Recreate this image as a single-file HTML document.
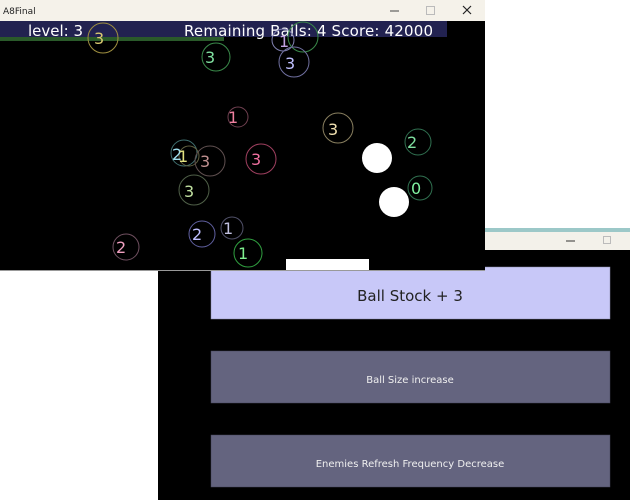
<!DOCTYPE html>
<html><head><style>
html,body{margin:0;padding:0;width:630px;height:500px;overflow:hidden;background:#fff;font-family:"DejaVu Sans","Liberation Sans",sans-serif}
svg{position:absolute;left:0;top:0}
</style></head><body>
<svg width="630" height="500" xmlns="http://www.w3.org/2000/svg" font-family="DejaVu Sans, Liberation Sans, sans-serif">
<rect x="485" y="228" width="145" height="4" fill="#9cc8c8"/>
<rect x="485" y="232" width="145" height="18" fill="#f3f1ea"/>
<line x1="566" y1="241" x2="575" y2="241" stroke="#333" stroke-width="1"/>
<rect x="603.5" y="236.5" width="7" height="7" fill="none" stroke="#bbb"/>
<rect x="158" y="250" width="472" height="250" fill="#000"/>
<rect x="211" y="267" width="399" height="52" fill="#c8c8f8" stroke="#8888a8" stroke-width="0.5"/>
<text x="410" y="301" font-size="15" fill="#222" text-anchor="middle">Ball Stock + 3</text>
<rect x="211" y="351" width="399" height="52" fill="#64647f" stroke="#44445a" stroke-width="0.5"/>
<text x="410" y="383" font-size="10" fill="#f0f0f0" text-anchor="middle">Ball Size increase</text>
<rect x="211" y="435" width="399" height="52" fill="#64647f" stroke="#44445a" stroke-width="0.5"/>
<text x="410" y="467" font-size="10" fill="#f0f0f0" text-anchor="middle">Enemies Refresh Frequency Decrease</text>
<rect x="0" y="0" width="485" height="270" fill="#000"/>
<rect x="0" y="0" width="485" height="21" fill="#f5f2ea"/>
<text x="3" y="14" font-size="9" fill="#222">A8Final</text>
<line x1="390" y1="11" x2="399" y2="11" stroke="#444"/>
<rect x="426.5" y="6.5" width="8" height="8" fill="none" stroke="#bbb"/>
<path d="M463 6 L471 14 M471 6 L463 14" stroke="#222" stroke-width="1.2"/>
<rect x="0" y="21" width="447" height="16" fill="#222250"/>
<rect x="0" y="37" width="224" height="4" fill="#2a5a2a"/>
<text x="28" y="36" font-size="15" fill="#fff">level: 3</text>
<text x="184" y="36" font-size="15" fill="#fff" textLength="249">Remaining Balls: 4  Score: 42000</text>
<g fill="none" stroke-width="1">
<circle cx="103" cy="38" r="15" stroke="#a09040"/>
<circle cx="216" cy="57" r="14" stroke="#3a8a4a"/>
<circle cx="283" cy="40" r="11" stroke="#8080b0"/>
<circle cx="303" cy="37" r="15" stroke="#3a8a4a"/>
<circle cx="294" cy="62" r="15" stroke="#7070a0"/>
<circle cx="238" cy="117" r="10" stroke="#704050"/>
<circle cx="338" cy="128" r="15" stroke="#8a8060"/>
<circle cx="184" cy="153" r="13" stroke="#407070"/>
<circle cx="189" cy="156" r="10" stroke="#606040"/>
<circle cx="210" cy="161" r="15" stroke="#605050"/>
<circle cx="261" cy="159" r="15" stroke="#a04060"/>
<circle cx="194" cy="190" r="15" stroke="#506048"/>
<circle cx="418" cy="142" r="13" stroke="#307050"/>
<circle cx="420" cy="188" r="12" stroke="#307050"/>
<circle cx="202" cy="234" r="13" stroke="#6060a0"/>
<circle cx="232" cy="228" r="11" stroke="#505068"/>
<circle cx="248" cy="253" r="14" stroke="#30a040"/>
<circle cx="126" cy="247" r="13" stroke="#705060"/>
</g>
<g font-size="16">
<text x="94" y="44" fill="#d8c870">3</text>
<text x="205" y="63" fill="#80e0a0">3</text>
<text x="279" y="47" fill="#c0a0e0">1</text>
<text x="285" y="69" fill="#c0c0ff">3</text>
<text x="228" y="123" fill="#f080a0">1</text>
<text x="328" y="135" fill="#f0e0b0">3</text>
<text x="172" y="160" fill="#a0e0f0">2</text>
<text x="178" y="162" fill="#e0e080">1</text>
<text x="200" y="167" fill="#c09090">3</text>
<text x="251" y="165" fill="#f070a0">3</text>
<text x="184" y="197" fill="#c0e0a0">3</text>
<text x="407" y="148" fill="#80e0a0">2</text>
<text x="411" y="194" fill="#80f0a0">0</text>
<text x="192" y="240" fill="#c0c0ff">2</text>
<text x="223" y="234" fill="#c0c0e0">1</text>
<text x="238" y="259" fill="#80f090">1</text>
<text x="116" y="253" fill="#f0a0c0">2</text>
</g>
<circle cx="377" cy="158" r="15" fill="#fff"/>
<circle cx="394" cy="202" r="15" fill="#fff"/>
<rect x="286" y="259" width="83" height="11" fill="#fff"/>
<rect x="0" y="270" width="485" height="1" fill="#999"/>
</svg>
</body></html>
